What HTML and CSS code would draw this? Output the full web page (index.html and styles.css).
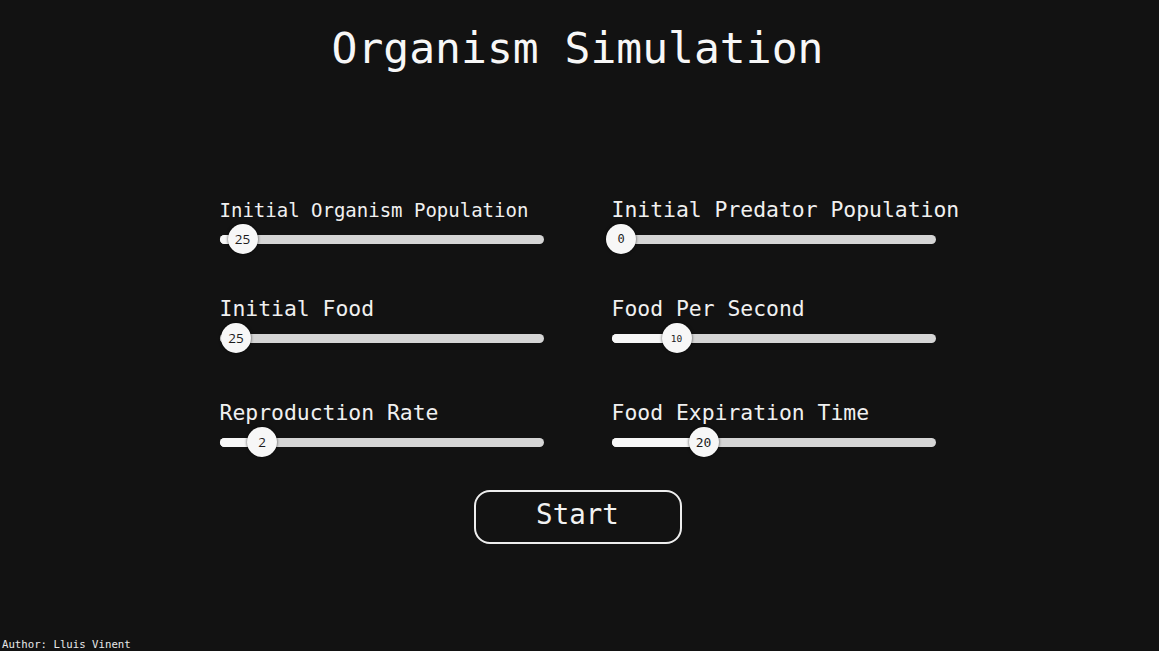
FILE: index.html
```html
<!DOCTYPE html>
<html lang="en">
<head>
<meta charset="utf-8">
<title>Organism Simulation</title>
<link rel="stylesheet" href="styles.css">
</head>
<body>
<main class="page">
  <h1 class="title">Organism Simulation</h1>
  <section class="grid">
    <div class="field">
      <div class="label label-small">Initial Organism Population</div>
      <div class="slider">
        <div class="track"><div class="fill" style="width:23px"></div></div>
        <div class="thumb sans" style="left:8px">25</div>
      </div>
    </div>
    <div class="field">
      <div class="label">Initial Predator Population</div>
      <div class="slider">
        <div class="track"><div class="fill" style="width:9px"></div></div>
        <div class="thumb mono small" style="left:-5.5px">0</div>
      </div>
    </div>
    <div class="field">
      <div class="label">Initial Food</div>
      <div class="slider">
        <div class="track"><div class="fill" style="width:16px"></div></div>
        <div class="thumb sans" style="left:1.5px">25</div>
      </div>
    </div>
    <div class="field">
      <div class="label">Food Per Second</div>
      <div class="slider">
        <div class="track"><div class="fill" style="width:65px"></div></div>
        <div class="thumb mono tiny" style="left:50px">10</div>
      </div>
    </div>
    <div class="field late">
      <div class="label">Reproduction Rate</div>
      <div class="slider">
        <div class="track"><div class="fill" style="width:42px"></div></div>
        <div class="thumb sans" style="left:27.5px">2</div>
      </div>
    </div>
    <div class="field late">
      <div class="label">Food Expiration Time</div>
      <div class="slider">
        <div class="track"><div class="fill" style="width:92px"></div></div>
        <div class="thumb mono" style="left:77px">20</div>
      </div>
    </div>
  </section>
  <div class="actions">
    <button class="start" type="button">Start</button>
  </div>
  <footer class="author">Author: Lluis Vinent</footer>
</main>
</body>
</html>
```

FILE: styles.css
```css
html, body {
  margin: 0;
  padding: 0;
  background: #121212;
}

.page {
  min-height: 651px;
  height: 100vh;
  box-sizing: border-box;
  display: flex;
  flex-direction: column;
  color: #f2f2f2;
  font-family: "DejaVu Sans Mono", "Liberation Mono", monospace;
}

.title {
  margin: 22px 4px 0 0;
  font-size: 43px;
  line-height: 52px;
  font-weight: normal;
  text-align: center;
  color: #f7f7f7;
}

.grid {
  margin-top: 124px;
  padding-right: 4px;
  display: grid;
  grid-template-columns: 324px 324px;
  column-gap: 68px;
  row-gap: 43px;
  justify-content: center;
}

.field {
  display: flex;
  flex-direction: column;
  gap: 2px;
}

.field.late {
  margin-top: 5px;
}

.label {
  font-size: 21.4px;
  line-height: 24px;
  white-space: nowrap;
  color: #f0f0f0;
}

.label-small {
  font-size: 19px;
}

.slider {
  position: relative;
  height: 30px;
  display: flex;
  align-items: center;
}

.track {
  width: 100%;
  height: 9px;
  border-radius: 5px;
  background: #d5d5d5;
  overflow: hidden;
}

.fill {
  height: 100%;
  background: #f7f7f7;
}

.thumb {
  position: absolute;
  top: 0;
  width: 30px;
  height: 30px;
  border-radius: 50%;
  background: #f7f7f7;
  box-shadow: 0 0 3px rgba(0, 0, 0, 0.7);
  color: #1c1c1c;
  display: flex;
  align-items: center;
  justify-content: center;
  font-size: 13px;
}

.thumb.sans {
  font-family: "Open Sans", "DejaVu Sans", sans-serif;
  font-size: 13.5px;
}

.thumb.mono {
  font-family: "DejaVu Sans Mono", monospace;
  font-size: 13px;
}

.thumb.small {
  font-size: 12px;
}

.thumb.tiny {
  font-size: 9.5px;
}

.actions {
  margin-top: 33px;
  padding-right: 4px;
  display: flex;
  justify-content: center;
}

.start {
  width: 208px;
  height: 54px;
  border: 2px solid #eeeeee;
  border-radius: 16px;
  background: #121212;
  color: #f2f2f2;
  font-family: "DejaVu Sans Mono", monospace;
  font-size: 27.5px;
  line-height: 1;
  padding: 0 0 4px;
  cursor: pointer;
}

.author {
  margin-top: auto;
  padding-left: 2px;
  font-size: 10.7px;
  line-height: 13px;
  color: #e8e8e8;
}
```
